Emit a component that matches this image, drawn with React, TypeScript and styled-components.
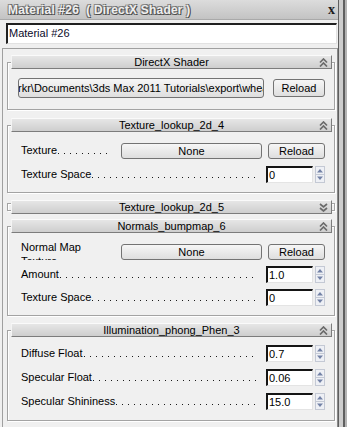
import React from "react"
import styled, { createGlobalStyle } from "styled-components"

const GlobalStyle = createGlobalStyle`
  html, body {
    margin: 0;
    padding: 0;
    background: #f0f0f0;
  }
  body {
    font-family: "Liberation Sans", Arial, sans-serif;
    font-size: 11px;
    color: #000;
  }
`

function Chevron({ closed }: { closed?: boolean }) {
    return (
        <svg width="9" height="9" viewBox="0 0 9 9">
            <g fill="none" stroke="#6b6b6b" strokeWidth="1.7">
                {closed ? (
                    <>
                        <polyline points="1,1 4.5,4 8,1" />
                        <polyline points="1,5 4.5,8 8,5" />
                    </>
                ) : (
                    <>
                        <polyline points="1,4.5 4.5,1 8,4.5" />
                        <polyline points="1,8.5 4.5,5 8,8.5" />
                    </>
                )}
            </g>
        </svg>
    )
}

function Spinner() {
    return (
        <svg width="10" height="17" viewBox="0 0 10 17">
            <rect x="0.5" y="0.5" width="9" height="16" fill="#eef0f5" stroke="#c4c9d4" />
            <line x1="1" y1="8.5" x2="9" y2="8.5" stroke="#c4c9d4" />
            <polygon points="2,6.5 5,3 8,6.5" fill="#7382a6" />
            <polygon points="2,10.5 8,10.5 5,14" fill="#7382a6" />
        </svg>
    )
}

type RolloutProps = {
    title: string
    closed?: boolean
    top: number
    padTop?: number
    padBottom?: number
    gap?: number
    children?: React.ReactNode
}

function Rollout({ title, closed, top, padTop = 8, padBottom = 9, gap = 7, children }: RolloutProps) {
    return (
        <Frame $top={top}>
            <Header $closed={closed}>
                <span />
                <HeaderTitle>{title}</HeaderTitle>
                <ChevronBox><Chevron closed={closed} /></ChevronBox>
            </Header>
            {!closed && (
                <Body $padTop={padTop} $padBottom={padBottom} $gap={gap}>
                    {children}
                </Body>
            )}
        </Frame>
    )
}

function NumberRow({ label, value }: { label: string; value: string }) {
    return (
        <FieldRow>
            <Label>{label}</Label>
            <Leader />
            <NumberInput>{value}</NumberInput>
            <Spinner />
        </FieldRow>
    )
}

export default function App() {
    return (
        <>
            <GlobalStyle />
            <Window>
                <Main>
                    <TitleBar>
                        <TitleText>Material #26  ( DirectX Shader )</TitleText>
                        <CloseX>x</CloseX>
                    </TitleBar>
                    <NameRow>
                        <NameField>Material #26</NameField>
                    </NameRow>
                    <Panel>
                        <Rollout title="DirectX Shader" top={13} padTop={9} padBottom={11}>
                            <FileRow>
                                <PathButton>
                                    <PathText>rkr\Documents\3ds Max 2011 Tutorials\export\whea</PathText>
                                </PathButton>
                                <Button $w={52} $h={18}>Reload</Button>
                            </FileRow>
                        </Rollout>

                        <Rollout title="Texture_lookup_2d_4" top={15} padTop={10} padBottom={9}>
                            <FieldRow>
                                <Label>Texture</Label>
                                <Leader $right={11} />
                                <Button $w={141} $h={16}>None</Button>
                                <Button $w={57} $h={16} $gap={6}>Reload</Button>
                            </FieldRow>
                            <NumberRow label="Texture Space" value="0" />
                        </Rollout>

                        <Rollout title="Texture_lookup_2d_5" closed top={10} />

                        <Rollout title="Normals_bumpmap_6" top={15} padTop={7} padBottom={9} gap={6}>
                            <FieldRow $tall>
                                <WrapLabel>Normal Map Texture</WrapLabel>
                                <Button $w={141} $h={16}>None</Button>
                                <Button $w={57} $h={16} $gap={6}>Reload</Button>
                            </FieldRow>
                            <NumberRow label="Amount" value="1.0" />
                            <NumberRow label="Texture Space" value="0" />
                        </Rollout>

                        <Rollout title="Illumination_phong_Phen_3" top={14} padTop={8} padBottom={10}>
                            <NumberRow label="Diffuse Float" value="0.7" />
                            <NumberRow label="Specular Float" value="0.06" />
                            <NumberRow label="Specular Shininess" value="15.0" />
                        </Rollout>
                    </Panel>
                </Main>
                <Track />
            </Window>
        </>
    )
}

const Window = styled.div`
    display: flex;
    width: 347px;
    height: 427px;
    overflow: hidden;
    background: #f0f0f0;
`

const Main = styled.div`
    width: 338px;
    display: flex;
    flex-direction: column;
`

const Track = styled.div`
    width: 9px;
    background: linear-gradient(to right, #5f5f5f 0 1px, #cdcdcd 1px 5px, #5f5f5f 5px 7px, #b4b4b4 7px);
`

const TitleBar = styled.div`
    box-sizing: border-box;
    height: 20px;
    flex-shrink: 0;
    display: flex;
    align-items: center;
    justify-content: space-between;
    padding: 0 3px 0 8px;
    background: linear-gradient(#dcdcdc, #c3c3c3);
    border-bottom: 1px solid #a9a9a9;
`

const TitleText = styled.span`
    font-weight: bold;
    font-size: 12px;
    letter-spacing: 0.2px;
    white-space: pre;
    color: #efefef;
    text-shadow: 1px 1px 0 #4d4d4d, -1px -1px 0 #8a8a8a, 1px -1px 0 #6e6e6e, -1px 1px 0 #6e6e6e;
`

const CloseX = styled.span`
    font-family: "Liberation Serif", serif;
    font-weight: bold;
    font-size: 14px;
    color: #1e1e1e;
`

const NameRow = styled.div`
    height: 28px;
    flex-shrink: 0;
    box-sizing: border-box;
    padding: 3px 1px 0 6px;
    background: #efefef;
`

const NameField = styled.div`
    box-sizing: border-box;
    height: 21px;
    background: #fff;
    border-top: 2px solid #202020;
    border-left: 2px solid #202020;
    border-right: 1px solid #e2e2e2;
    border-bottom: 1px solid #e2e2e2;
    padding: 2px 1px;
    font-size: 11px;
    color: #0a0a2a;
`

const Panel = styled.div`
    flex: 1;
    display: flex;
    flex-direction: column;
    margin-left: 2px;
    padding: 0 2px 0 4px;
    border-top: 1px solid #a0a0a0;
    border-left: 1px solid #a0a0a0;
    border-right: 1px solid #8a8a8a;
    background: #f0f0f0;
`

const Frame = styled.div<{ $top: number }>`
    margin-top: ${p => p.$top}px;
    border: 1px solid #a3a3a3;
    box-shadow: inset 1px 1px 0 #fff, 1px 1px 0 #fff;
    flex-shrink: 0;
`

const Header = styled.div<{ $closed?: boolean }>`
    box-sizing: border-box;
    height: 14px;
    margin: ${p => (p.$closed ? "-4px 2px -4px 3px" : "-8px 2px 0 3px")};
    display: grid;
    grid-template-columns: 1fr auto 1fr;
    align-items: center;
    background: linear-gradient(#e6e6e6, #cecece);
    border: 1px solid;
    border-color: #fafafa #7c7c7c #7c7c7c #f4f4f4;
    line-height: 12px;
`

const HeaderTitle = styled.span`
    font-size: 11px;
    white-space: nowrap;
`

const ChevronBox = styled.span`
    justify-self: end;
    display: flex;
    margin-right: 3px;
`

const Body = styled.div<{ $padTop: number; $padBottom: number; $gap: number }>`
    display: flex;
    flex-direction: column;
    gap: ${p => p.$gap}px;
    padding: ${p => p.$padTop}px 0 ${p => p.$padBottom}px;
`

const FileRow = styled.div`
    display: flex;
    align-items: center;
    height: 20px;
    padding: 0 9px 0 10px;
    justify-content: space-between;
`

const FieldRow = styled.div<{ $tall?: boolean }>`
    display: flex;
    align-items: ${p => (p.$tall ? "flex-end" : "center")};
    height: ${p => (p.$tall ? 20 : 17)}px;
    padding: 0 9px 0 13px;
`

const Label = styled.span`
    white-space: nowrap;
    line-height: 13px;
`

const WrapLabel = styled.span`
    align-self: flex-start;
    width: 80px;
    height: 20px;
    overflow: hidden;
    line-height: 14px;
    margin-right: auto;
`

const Leader = styled.span<{ $right?: number }>`
    flex: 1;
    align-self: flex-start;
    height: 1px;
    margin: 11px ${p => p.$right ?? 8}px 0 1px;
    background-image: linear-gradient(to right, #1a1a1a 1px, transparent 1px);
    background-size: 6px 1px;
    background-repeat: repeat-x;
`

const Button = styled.div<{ $w: number; $h: number; $gap?: number }>`
    box-sizing: border-box;
    width: ${p => p.$w}px;
    height: ${p => p.$h}px;
    margin-left: ${p => p.$gap ?? 0}px;
    flex-shrink: 0;
    display: flex;
    align-items: center;
    justify-content: center;
    border: 1px solid #737373;
    border-radius: 3px;
    background: linear-gradient(#f6f6f6, #dedede);
    font-size: 11px;
    white-space: nowrap;
`

const PathButton = styled(Button).attrs({ $w: 246, $h: 20 })`
    justify-content: flex-start;
    overflow: hidden;
`

const PathText = styled.span`
    display: block;
    flex: 1;
    min-width: 0;
    overflow: hidden;
    white-space: nowrap;
    margin-left: -1px;
`

const NumberInput = styled.div`
    box-sizing: border-box;
    width: 47px;
    height: 17px;
    margin-right: 2px;
    flex-shrink: 0;
    background: #fff;
    border-top: 2px solid #151515;
    border-left: 2px solid #151515;
    border-right: 1px solid #e4e4e4;
    border-bottom: 1px solid #e4e4e4;
    padding: 1px 0 0 1px;
    font-size: 11px;
    line-height: 13px;
`
